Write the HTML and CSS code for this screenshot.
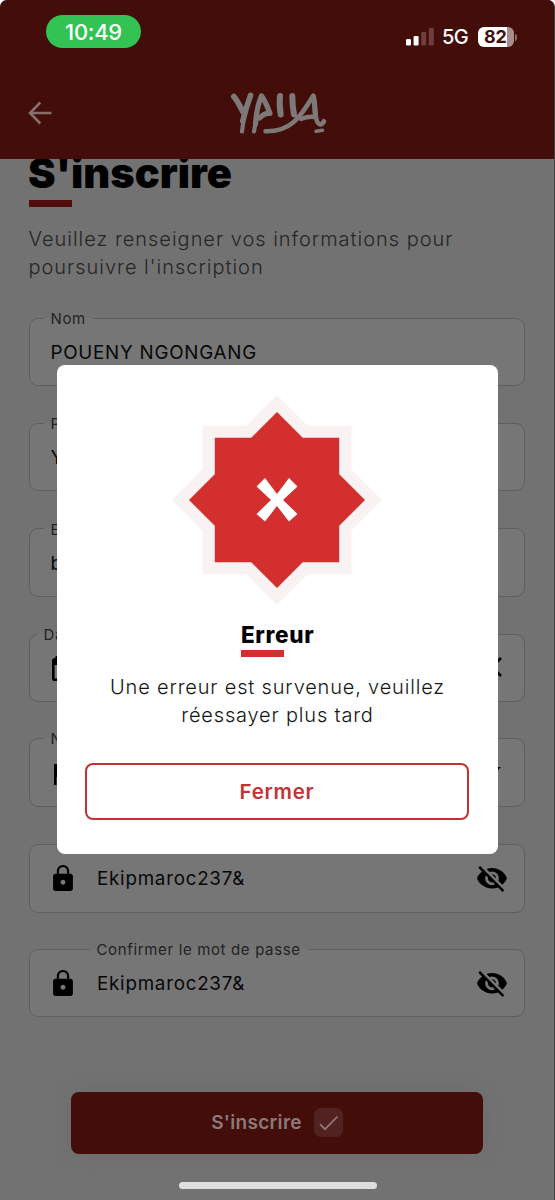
FILE: index.html
```html
<!DOCTYPE html>
<html lang="fr">
<head>
<meta charset="utf-8">
<title>S'inscrire</title>
<link rel="stylesheet" href="styles.css">
</head>
<body>
<div class="screen">
  <header class="header">
    <div class="status">
      <span class="time">10:49</span>
      <div class="indicators">
        <svg class="signal" width="28" height="18" viewBox="0 0 28 18">
          <rect x="0" y="11" width="5" height="6.500" rx="1.300" fill="#fff"/>
          <rect x="7.600" y="8" width="5" height="9.500" rx="1.300" fill="#fff"/>
          <rect x="15.200" y="4" width="5" height="13.500" rx="1.300" fill="#6f3e3c"/>
          <rect x="22.800" y="0" width="5" height="17.500" rx="1.300" fill="#6f3e3c"/>
        </svg>
        <span class="network">5G</span>
        <span class="battery"><span class="level">82</span></span><i class="battery-tip"></i>
      </div>
    </div>
    <div class="navbar">
      <svg class="back" width="24" height="24" viewBox="0 0 24 24"><path d="M12.300 1.500 2 12l10.300 10.500M2 12h21.500" fill="none" stroke="#85706e" stroke-width="2.500"/></svg>
      <svg class="logo" width="98" height="46" viewBox="0 0 98 46">
        <g fill="none" stroke="#7d7978" stroke-width="5.600" stroke-linecap="round" stroke-linejoin="round">
          <path d="M4.800 6.500C8 10 11 16 14 22M21.500 5.500C18 15 15 26 13.800 31"/>
          <path d="M14.800 28 13 41.500M26.500 33 25 41.500" stroke-width="4.200"/>
          <path d="M26.500 34C27 25 29.500 13 32.500 5.800C36.500 11 38.500 17 41 23.500C37 23 33 25.500 30.500 28" stroke-width="5.200"/>
          <path d="M51 6C50.300 12 51 20 51.700 24.500" stroke-width="6"/>
          <path d="M63.300 6C63.300 12 64 19 65 24.500" stroke-width="6"/>
          <path d="M36.500 41.300C60 42 70 30 84.300 5.500C86 16 85.500 31 90 34C92.500 35 94 33.500 95 31.200M72 29C77 27 81 26 86 27" stroke-width="4.500"/>
          <path d="M84.500 7C86 14 86 20 86.500 26" stroke-width="5.200"/>
          <path d="M87 41.300 93.500 40.300" stroke-width="3.600"/>
        </g>
      </svg>
    </div>
  </header>

  <main class="page">
    <h1 class="title">S'inscrire</h1>
    <div class="rule"></div>
    <p class="intro">Veuillez renseigner vos informations pour<br>poursuivre l'inscription</p>

    <form class="form">
      <fieldset class="field"><legend>Nom</legend><span class="value">POUENY NGONGANG</span></fieldset>
      <fieldset class="field"><legend>Prénom</legend><span class="value">Y</span></fieldset>
      <fieldset class="field"><legend>Email</legend><span class="value">b</span></fieldset>
      <fieldset class="field date"><legend>Date</legend>
        <svg class="calendar" width="24" height="26" viewBox="0 0 24 26"><path d="M5 0v3M19 0v3" stroke="#000" stroke-width="3"/><rect x="1.300" y="3.300" width="21.400" height="20.400" rx="1.500" fill="none" stroke="#000" stroke-width="2.600"/><path d="M1 3h22v6H1z"/></svg>
        <svg class="clear" width="20" height="20" viewBox="0 0 20 20"><path d="M1 1l18 18M19 1 1 19" stroke="#000" stroke-width="2.600"/></svg>
      </fieldset>
      <fieldset class="field phone"><legend>Numéro</legend>
        <svg class="flag" width="22" height="22" viewBox="0 0 22 22"><path d="M0 0h20v13H2.600v8H0z"/></svg>
        <svg class="caret" width="12" height="6" viewBox="0 0 12 6"><path d="M0 0h12L6 6z"/></svg>
      </fieldset>
      <fieldset class="field secret plain">
        <svg class="lock" width="20" height="26" viewBox="4 1 16 21"><path d="M18 8h-1V6c0-2.760-2.240-5-5-5S7 3.240 7 6v2H6c-1.100 0-2 .9-2 2v10c0 1.100.9 2 2 2h12c1.100 0 2-.9 2-2V10c0-1.100-.9-2-2-2zm-6 9c-1.100 0-2-.9-2-2s.9-2 2-2 2 .9 2 2-.9 2-2 2zM8.700 8V6c0-1.820 1.480-3.300 3.300-3.300s3.300 1.480 3.300 3.300v2z"/></svg>
        <span class="value">Ekipmaroc237&amp;</span>
        <svg class="eye" width="32" height="28" viewBox="0.500 1.500 23 20.500"><path d="M12 7c2.760 0 5 2.240 5 5 0 .65-.13 1.260-.36 1.830l2.920 2.920c1.510-1.260 2.700-2.890 3.430-4.750-1.730-4.390-6-7.500-11-7.500-1.400 0-2.740.25-3.980.7l2.160 2.160C10.740 7.130 11.350 7 12 7zM2 4.270l2.280 2.280.46.46C3.080 8.300 1.780 10.020 1 12c1.730 4.390 6 7.500 11 7.500 1.550 0 3.030-.3 4.380-.84l.42.42L19.730 22 21 20.730 3.270 3 2 4.270zM7.530 9.800l1.550 1.550c-.05.21-.08.43-.08.650 0 1.660 1.340 3 3 3 .22 0 .44-.03.650-.08l1.550 1.550c-.67.33-1.410.53-2.200.53-2.760 0-5-2.240-5-5 0-.79.2-1.530.53-2.200zm4.310-.78l3.150 3.150.02-.16c0-1.660-1.340-3-3-3l-.17.010z"/></svg>
      </fieldset>
      <fieldset class="field secret"><legend>Confirmer le mot de passe</legend>
        <svg class="lock" width="20" height="26" viewBox="4 1 16 21"><path d="M18 8h-1V6c0-2.760-2.240-5-5-5S7 3.240 7 6v2H6c-1.100 0-2 .9-2 2v10c0 1.100.9 2 2 2h12c1.100 0 2-.9 2-2V10c0-1.100-.9-2-2-2zm-6 9c-1.100 0-2-.9-2-2s.9-2 2-2 2 .9 2 2-.9 2-2 2zM8.700 8V6c0-1.820 1.480-3.300 3.300-3.300s3.300 1.480 3.300 3.300v2z"/></svg>
        <span class="value">Ekipmaroc237&amp;</span>
        <svg class="eye" width="32" height="28" viewBox="0.500 1.500 23 20.500"><path d="M12 7c2.760 0 5 2.240 5 5 0 .65-.13 1.260-.36 1.830l2.920 2.920c1.510-1.260 2.700-2.890 3.430-4.750-1.730-4.390-6-7.500-11-7.500-1.400 0-2.740.25-3.980.7l2.160 2.160C10.740 7.130 11.350 7 12 7zM2 4.270l2.280 2.280.46.46C3.080 8.300 1.780 10.020 1 12c1.730 4.390 6 7.500 11 7.500 1.550 0 3.030-.3 4.380-.84l.42.42L19.730 22 21 20.730 3.270 3 2 4.270zM7.530 9.800l1.550 1.550c-.05.21-.08.43-.08.650 0 1.660 1.340 3 3 3 .22 0 .44-.03.650-.08l1.550 1.550c-.67.33-1.410.53-2.200.53-2.760 0-5-2.240-5-5 0-.79.2-1.530.53-2.200zm4.310-.78l3.150 3.150.02-.16c0-1.660-1.340-3-3-3l-.17.010z"/></svg>
      </fieldset>
    </form>

    <button class="submit" type="button"><span>S'inscrire</span>
      <svg width="29" height="29" viewBox="0 0 29 29"><rect width="29" height="29" rx="7" fill="#512220"/><path d="M6 16.200l5 5L23.500 8.500" fill="none" stroke="#8b7a79" stroke-width="1.700"/></svg>
    </button>
    <div class="home-bar"></div>
  </main>

  <div class="modal">
    <svg class="star" width="212" height="212" viewBox="-106 -106 212 212">
      <path d="M0-105 105 0 0 105-105 0zM-74.500-74.500h149v149h-149z" fill="#f9f2f3"/>
      <path d="M0-88 88 0 0 88-88 0zM-62.200-62.200H62.200V62.200H-62.200z" fill="#d32f2f"/>
      <path d="M-12-22 0-6 12-22 20.500-13.500 6 0 20.500 14 12 21.500 0 6-12 21.500-20.500 14-6 0-20.500-13.500z" fill="#fff"/>
    </svg>
    <h2 class="modal-title">Erreur</h2>
    <div class="modal-rule"></div>
    <p class="message">Une erreur est survenue, veuillez<br>réessayer plus tard</p>
    <button class="close" type="button">Fermer</button>
  </div>
</div>
</body>
</html>
```
FILE: styles.css
```css
* { box-sizing: border-box; }
body { margin: 0; background: #fff; font-family: Inter, "Liberation Sans", sans-serif; }
h1, h2, p { margin: 0; }
svg { display: block; flex: none; }
button { font-family: inherit; }

.screen {
  position: relative;
  width: 555px;
  height: 1200px;
  overflow: hidden;
  background: #727272;
  border-right: 1px solid #414141;
  border-radius: 7px 7px 0 0;
}

/* The header stays above the scrolled page content. */
.header { position: relative; z-index: 1; height: 159px; background: #430d0a; }
.status { display: flex; justify-content: space-between; height: 79px; padding: 15px 37px 0 46px; }
.time {
  width: 95px; height: 33px; border-radius: 17px;
  background: #32c352; color: #fff;
  font-size: 22px; font-weight: 500; line-height: 34px; text-align: center; letter-spacing: -0.3px;
}
.indicators { display: flex; height: 20px; margin-top: 12px; align-items: center; }
.network { margin-left: 8px; width: 36px; color: #fff; font-size: 20px; font-weight: 500; line-height: 20px; letter-spacing: -0.6px; }
.battery {
  width: 36px; height: 20px; border-radius: 6px;
  background: linear-gradient(90deg, #fff 29px, #a98d8c 29px);
}
.level { display: block; padding-left: 6px; color: #430d0a; font-size: 18px; font-weight: 700; line-height: 20px; letter-spacing: -0.3px; }
.battery-tip { width: 2px; height: 7px; margin-left: 1px; border-radius: 0 2px 2px 0; background: #8a6664; }

.navbar { display: flex; align-items: flex-start; padding-left: 28px; }
.back { margin-top: 22px; }
.logo { margin: 11px 0 0 177px; }

.page { padding: 0 29px 0 28.500px; }
.title { height: 41px; margin-left: -0.500px; color: #000; font-size: 41.500px; font-weight: 900; line-height: 28px; letter-spacing: 0; white-space: nowrap; }
.rule { width: 43px; height: 7px; background: #500d0b; }
.intro { margin-top: 18px; height: 56px; color: #262626; font-size: 20px; font-weight: 350; line-height: 28px; white-space: nowrap; letter-spacing: 0.980px; }

.form { margin-top: 27px; }
.field {
  display: flex; align-items: flex-start;
  height: 78px; margin: 0 0 27.400px; padding: 0 16px 0 14px;
  border: 1.500px solid #5f5f5f; border-radius: 9px;
  background: #767676; min-width: 0;
}
.field legend { height: 20px; padding: 0 7px; color: #222; font-size: 15px; line-height: 21px; letter-spacing: 0.650px; }
.value { margin-top: 12px; padding-left: 7px; color: #080808; font-size: 18.800px; line-height: 26px; letter-spacing: 0.750px; white-space: nowrap; }
.date { padding-left: 7px; margin-bottom: 26px; }
.phone { height: 79px; margin-bottom: 36.500px; }
.calendar { margin: 12px 0 0 15px; }
.clear, .caret { margin-left: auto; }
.clear { margin-top: 13px; margin-right: 6px; }
.caret { margin-top: 19px; margin-right: 7px; }
.flag { margin: 16px 0 0 10px; }
.plain { height: 69.500px; margin-bottom: 26.300px; }
.secret .value { padding-left: 0; margin-left: 24.500px; }
.plain .value { margin-top: 21px; }
.secret .lock { margin: 11px 0 0 9px; }
.secret.plain .lock { margin-top: 20px; }
.secret .eye { margin: 10px 0 0 auto; }
.secret.plain .eye { margin-top: 19px; }
.secret legend { margin-left: 46px; }

.submit {
  display: flex; justify-content: center; align-items: center; gap: 12px;
  width: 412px; height: 62px; margin: 74.500px 0 0 42.500px; padding: 0;
  border: 0; border-radius: 8px; background: #430d0a; color: #8b7a79;
  font-size: 19px; font-weight: 600; letter-spacing: 0.300px; box-shadow: 0 0 16px #6b6b6b;
}
.home-bar { width: 198px; height: 7px; margin: 28px 0 0 150px; border-radius: 4px; background: #dedede; }

.modal {
  position: absolute; z-index: 2; left: 57px; top: 364.500px;
  width: 441px; height: 489.500px; padding: 29px 28px;
  border-radius: 8px; background: #fff;
}
.star { margin-left: 86px; }
.modal-title { margin: 14px 0 1px 156px; color: #000; font-size: 22.500px; font-weight: 800; line-height: 29px; letter-spacing: 0.650px; }
.modal-rule { width: 43px; height: 7px; margin-left: 155.500px; background: #d32f2f; }
.message { margin-top: 16px; text-align: center; color: #161616; font-size: 20px; font-weight: 350; line-height: 28px; white-space: nowrap; letter-spacing: 0.820px; }
.close {
  display: block; width: 384px; height: 57px; margin-top: 34px; padding: 1px 0 0;
  border: 2px solid #c43136; border-radius: 8px; background: #fff;
  color: #c43136; font-size: 20.500px; font-weight: 600; letter-spacing: 0.700px;
}
```
